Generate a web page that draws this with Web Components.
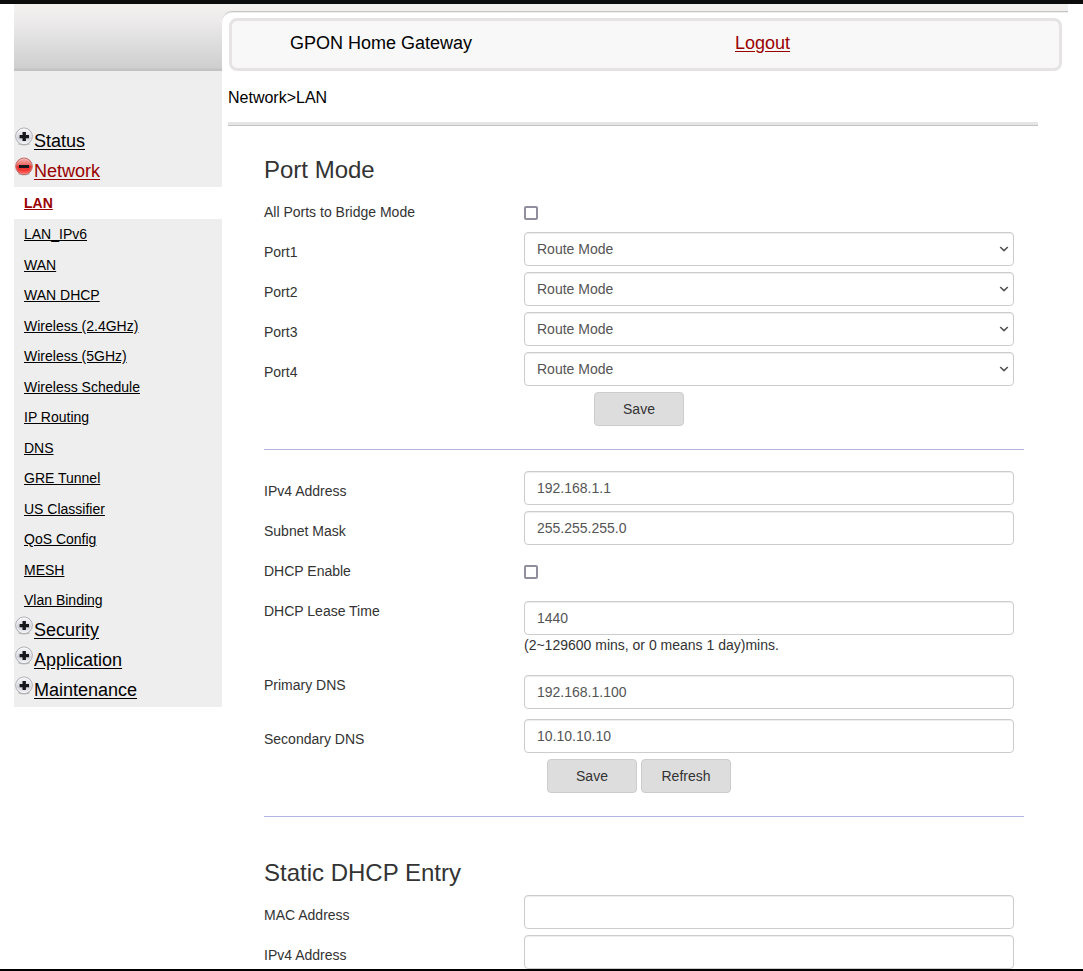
<!DOCTYPE html>
<html lang="en">
<head>
<meta charset="utf-8">
<title>GPON Home Gateway</title>
<style>
  body {
    margin: 0;
    height: 100vh;
    overflow: hidden;
    background: #fff;
    color: #333;
    font: 14px/20px "Liberation Sans", Arial, sans-serif;
  }
</style>
</head>
<body>
<gateway-shell>
  <side-nav slot="nav">
    <nav-group>Status</nav-group>
    <nav-group open>Network
      <nav-item slot="items" current>LAN</nav-item>
      <nav-item slot="items">LAN_IPv6</nav-item>
      <nav-item slot="items">WAN</nav-item>
      <nav-item slot="items">WAN DHCP</nav-item>
      <nav-item slot="items">Wireless (2.4GHz)</nav-item>
      <nav-item slot="items">Wireless (5GHz)</nav-item>
      <nav-item slot="items">Wireless Schedule</nav-item>
      <nav-item slot="items">IP Routing</nav-item>
      <nav-item slot="items">DNS</nav-item>
      <nav-item slot="items">GRE Tunnel</nav-item>
      <nav-item slot="items">US Classifier</nav-item>
      <nav-item slot="items">QoS Config</nav-item>
      <nav-item slot="items">MESH</nav-item>
      <nav-item slot="items">Vlan Binding</nav-item>
    </nav-group>
    <nav-group>Security</nav-group>
    <nav-group>Application</nav-group>
    <nav-group>Maintenance</nav-group>
  </side-nav>

  <page-header>GPON Home Gateway</page-header>
  <bread-crumb>Network&gt;LAN</bread-crumb>

  <form-section heading="Port Mode">
    <form-field type="checkbox" label="All Ports to Bridge Mode"></form-field>
    <form-field type="select" label="Port1" options="Route Mode,Bridge Mode"></form-field>
    <form-field type="select" label="Port2" options="Route Mode,Bridge Mode"></form-field>
    <form-field type="select" label="Port3" options="Route Mode,Bridge Mode"></form-field>
    <form-field type="select" label="Port4" options="Route Mode,Bridge Mode"></form-field>
    <action-button slot="actions">Save</action-button>
  </form-section>

  <form-section ruled>
    <form-field label="IPv4 Address" value="192.168.1.1"></form-field>
    <form-field label="Subnet Mask" value="255.255.255.0"></form-field>
    <form-field type="checkbox" label="DHCP Enable"></form-field>
    <form-field spaced label="DHCP Lease Time" value="1440">(2~129600 mins, or 0 means 1 day)mins.</form-field>
    <form-field spaced label="Primary DNS" value="192.168.1.100"></form-field>
    <form-field label="Secondary DNS" value="10.10.10.10"></form-field>
    <action-button slot="actions">Save</action-button>
    <action-button slot="actions">Refresh</action-button>
  </form-section>

  <form-section ruled heading="Static DHCP Entry">
    <form-field label="MAC Address"></form-field>
    <form-field label="IPv4 Address"></form-field>
  </form-section>
</gateway-shell>

<script>
  class BaseElement extends HTMLElement {
    connectedCallback() {
      if (this.shadowRoot) return;
      this.attachShadow({ mode: "open" }).innerHTML =
        "<style>*{box-sizing:border-box}:host([hidden]){display:none}</style>" + this.render();
    }
  }

  customElements.define("gateway-shell", class extends BaseElement {
    render() {
      return `<style>
        :host { display: flex; flex-direction: column; height: 100%; }
        .bar { flex: none; height: 4px; background: #0c0c0c; }
        .bar.end { height: 2px; background: #000; }
        .page {
          flex: 1; min-height: 0; overflow: hidden;
          margin: 0 15px 0 14px;
          display: grid; grid-template-columns: 208px minmax(0, 1fr); align-items: start;
          background: linear-gradient(#f3f2ef, #edebeb 16px, #cfcfcf 64px, #c3c3c3 65px, #c3c3c3 67px) top / 100% 67px no-repeat;
        }
        main {
          margin-top: 7px; padding-top: 6px;
          border-top: 1px solid #c6c6c6; border-top-left-radius: 10px;
          background: #fff; box-shadow: inset 0 1px #eee;
        }
      </style>
      <div class="bar"></div>
      <div class="page">
        <slot name="nav"></slot>
        <main><slot></slot></main>
      </div>
      <div class="bar end"></div>`;
    }
  });

  customElements.define("side-nav", class extends BaseElement {
    render() {
      return `<style>
        :host { display: block; padding-top: 67px; }
        nav { padding: 56px 0 1px; background: #eee; }
      </style>
      <nav><slot></slot></nav>`;
    }
  });

  const icon = open => `<svg width="20" height="20" viewBox="0 0 20 20" aria-hidden="true">
    <defs>
      <linearGradient id="face" x1="0" y1="0" x2="0" y2="1">
        ${open
          ? '<stop offset="0" stop-color="#f7b9b6"/><stop offset=".4" stop-color="#ee6a67"/><stop offset=".5" stop-color="#e6302f"/><stop offset=".75" stop-color="#f23a36"/><stop offset="1" stop-color="#ff7a70"/>'
          : '<stop offset="0" stop-color="#fafafc"/><stop offset=".5" stop-color="#d9dae2"/><stop offset=".6" stop-color="#cbccd6"/><stop offset="1" stop-color="#fbfbfd"/>'}
      </linearGradient>
    </defs>
    <ellipse cx="10" cy="17" rx="6" ry="1.4" fill="#777" opacity=".4"/>
    <circle cx="10" cy="9.3" r="8.3" fill="url(#face)" stroke="${open ? "#b5605e" : "#a3a3a9"}" stroke-width=".9"/>
    <circle cx="10" cy="9.3" r="7.4" fill="none" stroke="#fff" stroke-opacity="${open ? ".2" : ".6"}" stroke-width=".8"/>
    <path d="${open ? "M5 8h10v3H5z" : "M8.5 5h3.4v3H15v3.2h-3.1V14H8.5v-2.8H5.6V8h2.9z"}" fill="#17171c"/>
  </svg>`;

  customElements.define("nav-group", class extends BaseElement {
    render() {
      const open = this.hasAttribute("open");
      return `<style>
        :host { display: block; font-size: 18px; }
        .head { display: flex; height: 30px; color: ${open ? "#990000" : "#000"}; }
        svg { flex: none; }
        a { color: inherit; line-height: 28px; text-underline-offset: 2px; }
      </style>
      <div class="head">${icon(open)}<a href="#"><slot></slot></a></div>
      <slot name="items"></slot>`;
    }
  });

  customElements.define("nav-item", class extends BaseElement {
    render() {
      return `<style>
        :host { display: block; padding-left: 10px; font-size: 14px; line-height: 30px; color: #000; }
        :host(:nth-child(even)) { line-height: 31px; }
        :host([current]) { line-height: 32px; background: #fff; color: #990000; font-weight: bold; }
        a { color: inherit; text-underline-offset: 1px; }
      </style>
      <a href="#"><slot></slot></a>`;
    }
  });

  customElements.define("page-header", class extends BaseElement {
    render() {
      return `<style>
        :host { display: block; margin: 0 6px 0 7px; color: #000; }
        header {
          display: grid; grid-template-columns: 445px 1fr;
          padding: 10px 0 13px 58px;
          border: 3px solid #e5e3e3; border-radius: 8px; background: #f8f8f8;
          font-size: 18px; line-height: 24px;
        }
        a { color: #990000; justify-self: start; text-underline-offset: 2px; }
      </style>
      <header><span><slot></slot></span><a href="#">Logout</a></header>`;
    }
  });

  customElements.define("bread-crumb", class extends BaseElement {
    render() {
      return `<style>
        :host { display: block; margin: 17px 30px 9px 6px; font-size: 16px; color: #000; }
        :host::after {
          content: ""; display: block; margin-top: 14px; height: 4px;
          background: linear-gradient(#e5e5e5 3px, #c3c3c3 3px);
        }
      </style>
      <slot></slot>`;
    }
  });

  customElements.define("form-section", class extends BaseElement {
    render() {
      const heading = this.getAttribute("heading");
      return `<style>
        :host { display: block; margin: 0 44px 0 42px; }
        hr { margin: 23px 0 21px; border: 0; height: 1px; background: #b4b4e0; }
        h3 { margin: 0; padding: 22px 0 9px; font-size: 24px; line-height: 26px; font-weight: normal; }
        .body { padding-right: 10px; }
        .actions { display: flex; justify-content: center; gap: 4px; }
      </style>
      ${this.hasAttribute("ruled") ? "<hr>" : ""}
      ${heading ? `<h3>${heading}</h3>` : ""}
      <div class="body">
        <slot></slot>
        <div class="actions"><slot name="actions"></slot></div>
      </div>`;
    }
  });

  customElements.define("form-field", class extends BaseElement {
    render() {
      const type = this.getAttribute("type") || "text";
      const value = this.getAttribute("value") || "";
      const control = {
        text: `<input id="control" class="box" type="text" value="${value}">`,
        checkbox: `<input id="control" type="checkbox">`,
        select: `<select id="control" class="box">${(this.getAttribute("options") || "")
          .split(",").map(o => `<option>${o}</option>`).join("")}</select>`
      }[type];
      return `<style>
        :host { display: grid; grid-template-columns: 260px minmax(0, 1fr); min-height: 40px; align-items: start; }
        label { padding-top: 10px; }
        .box {
          display: block; width: 100%; height: 34px; margin: 0; padding: 6px 12px;
          border: 1px solid #ccc; border-radius: 4px; background: #fff;
          box-shadow: inset 0 1px 1px rgba(0, 0, 0, .075);
          color: #555; font: inherit; line-height: 20px; outline: 0;
        }
        select.box {
          appearance: none;
          background: #fff url("data:image/svg+xml,%3Csvg xmlns='http://www.w3.org/2000/svg' width='10' height='6'%3E%3Cpath d='M1.2 1 5 4.6 8.8 1' fill='none' stroke='%23555' stroke-width='1.6'/%3E%3C/svg%3E") right 4px center no-repeat;
        }
        input[type=checkbox] {
          appearance: none; display: block; width: 14px; height: 14px; margin: 14px 0 0;
          border: 2px solid #8f8f9d; border-radius: 2px; background: #fff;
        }
        input[type=checkbox]:checked { background: #8f8f9d; }
        :host([spaced]) .control { padding-top: 10px; }
        :host([spaced]) { padding-bottom: 10px; }
      </style>
      <label for="control">${this.getAttribute("label")}</label>
      <div class="control">${control}<slot></slot></div>`;
    }
  });

  customElements.define("action-button", class extends BaseElement {
    render() {
      return `<style>
        :host { display: block; }
        button {
          display: block; width: 90px; height: 34px; padding: 0;
          border: 1px solid #ccc; border-radius: 4px; background: #ddd;
          color: #333; font: inherit; cursor: pointer;
        }
      </style>
      <button type="button"><slot></slot></button>`;
    }
  });
</script>
</body>
</html>
